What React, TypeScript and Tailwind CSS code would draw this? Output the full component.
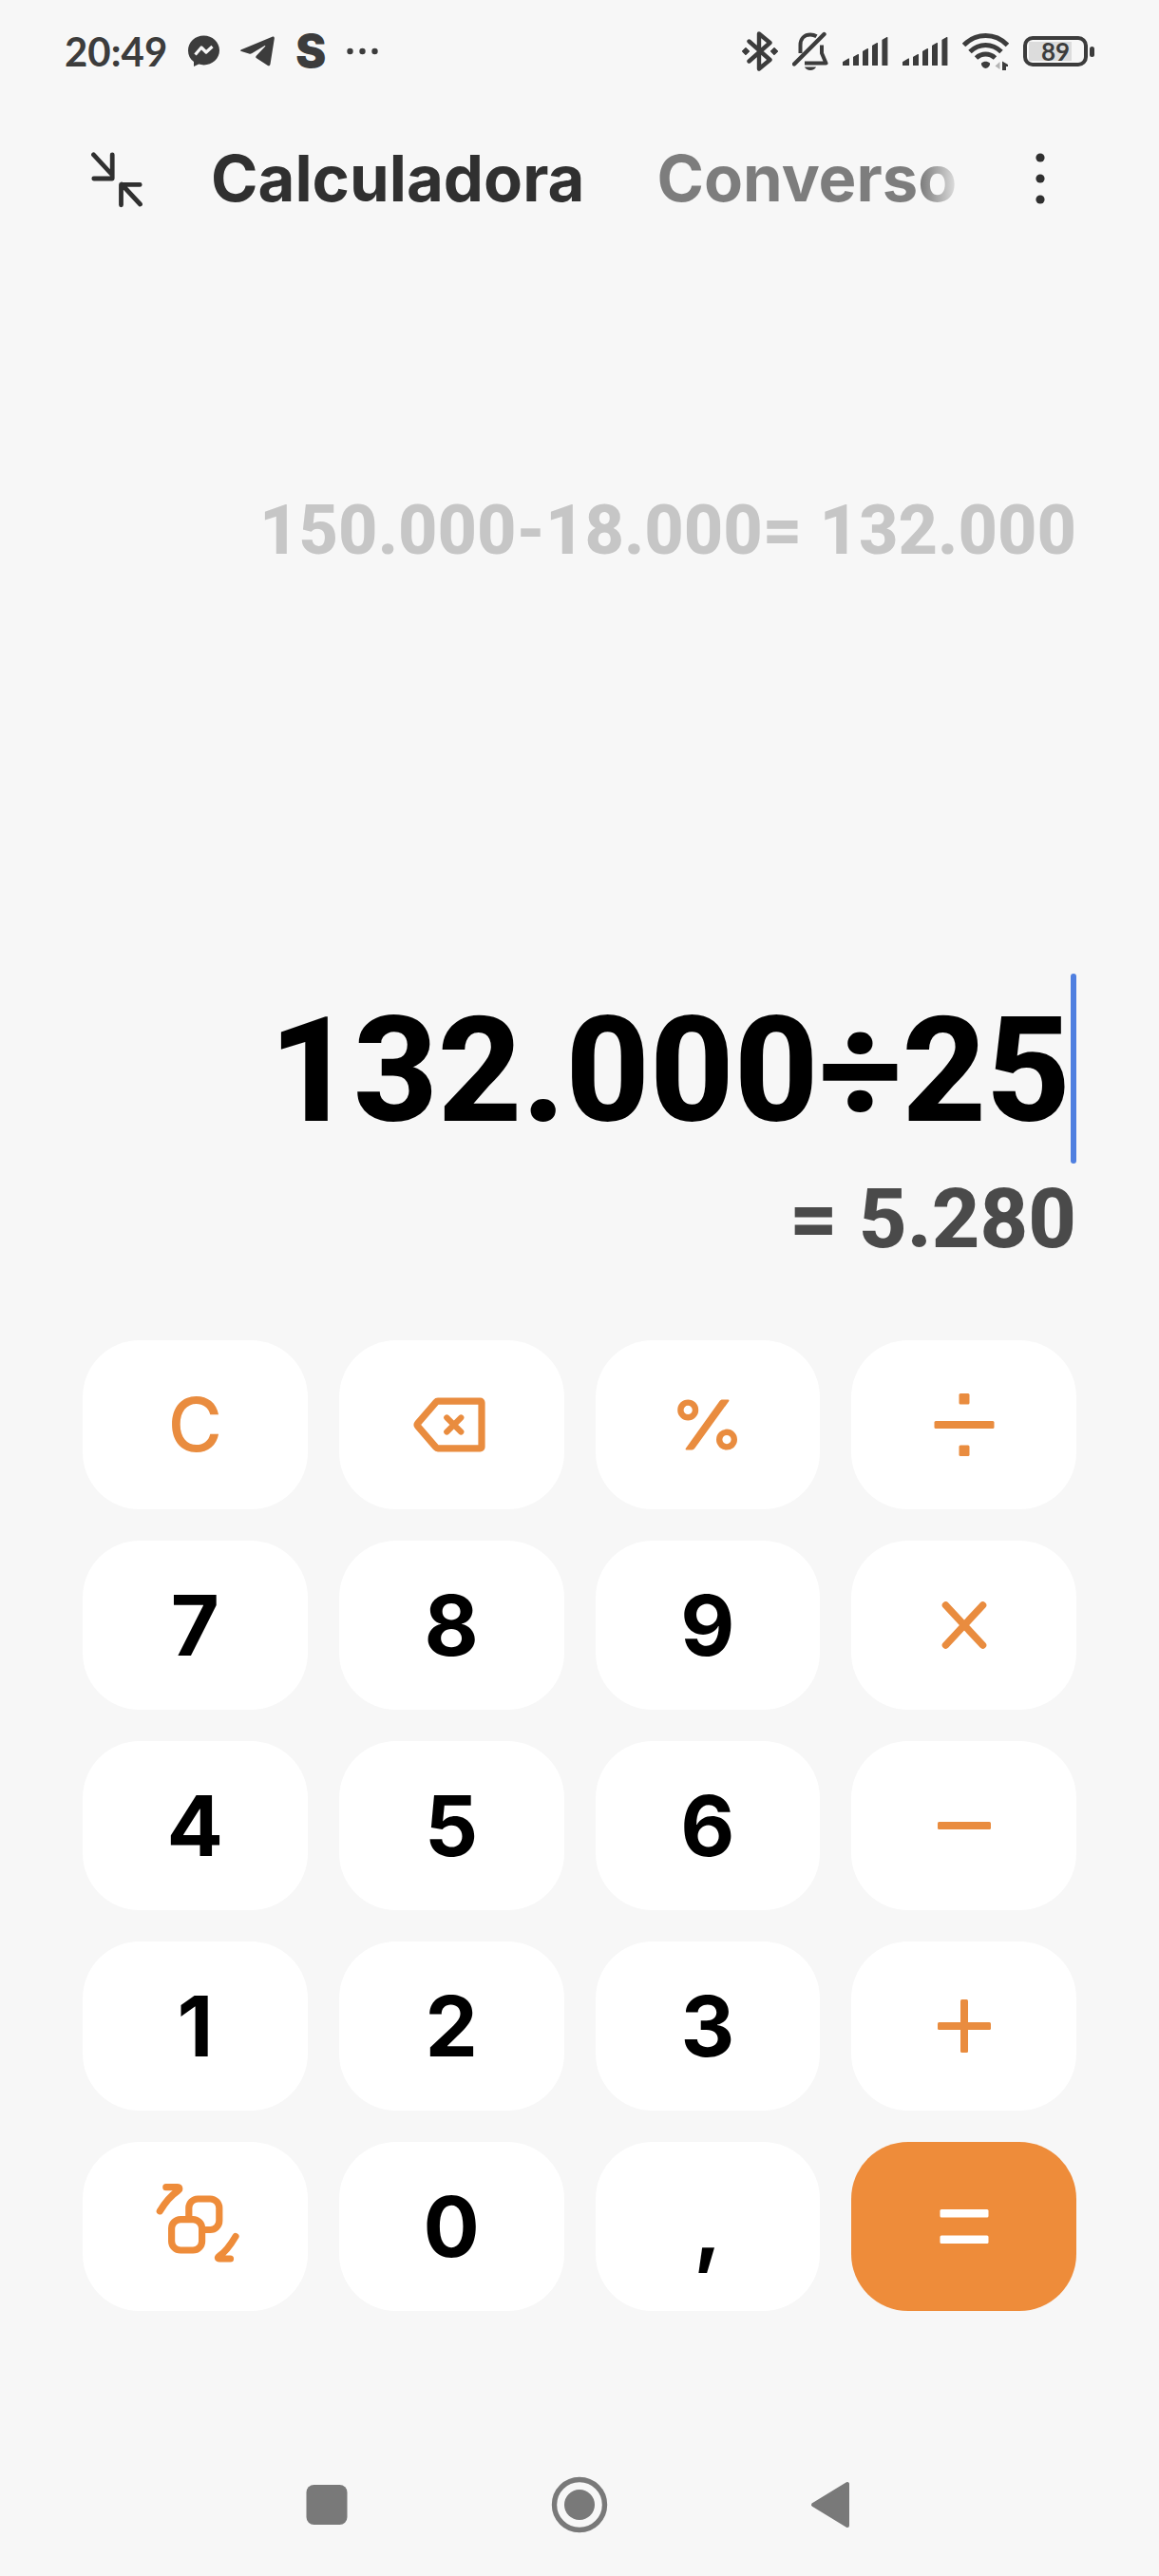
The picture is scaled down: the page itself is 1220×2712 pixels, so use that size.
import { useState } from 'react';
import type { ReactNode } from 'react';

// ============================================================
// Status bar icons
// ============================================================

function MessengerIcon() {
  return (
    <svg width="33" height="34" viewBox="0 0 33 34" fill="none" aria-hidden="true">
      <path d="M16.5 0.5C7.5 0.5 0 7.3 0 16.2c0 4.900 2.200 9 6 11.800V33l5.200-2.400c1.700.5 3.500.8 5.300.8 9 0 16.500-6.700 16.500-15.400S25.500.5 16.500.5Z" fill="#3c3c3c" />
      <path d="m7.500 20.500 6.500-7.500 5 5 6.500-6" stroke="#f7f7f7" strokeWidth="3.200" strokeLinejoin="round" />
    </svg>
  );
}

function TelegramIcon() {
  return (
    <svg width="36" height="32" viewBox="0 0 36 32" aria-hidden="true">
      <path d="M1 14.200 33.500.7c1.500-.6 2.600.2 2.300 2l-4.300 26.800c-.3 1.800-1.500 2.300-3 1.300L17 23.200c-1-.7-1-1.600-.2-2.500L26 11c.7-.9.200-1.300-.7-.7L12 18.300c-1 .5-1.800.6-2.900.2L1 16c-1.200-.4-1.200-1.300 0-1.800Z" fill="#3c3c3c" />
    </svg>
  );
}

function MoreDots() {
  return (
    <svg width="33" height="8" viewBox="0 0 33 8" fill="#3c3c3c" aria-hidden="true">
      <circle cx="3.500" cy="4" r="3.200" />
      <circle cx="16.500" cy="4" r="3.200" />
      <circle cx="29.500" cy="4" r="3.200" />
    </svg>
  );
}

function BluetoothIcon() {
  return (
    <svg width="38" height="42" viewBox="0 0 38 42" fill="none" aria-hidden="true">
      <path d="M7.500 10.500 29.500 30 18 39.500v-37L29.500 12 7.500 31.500" stroke="#3c3c3c" strokeWidth="4.400" strokeLinecap="round" strokeLinejoin="round" />
      <path d="m4 17.200 3.800 3.800L4 24.800 0.200 21ZM34 17.200l3.800 3.800-3.800 3.800-3.800-3.800Z" fill="#3c3c3c" stroke="#3c3c3c" strokeWidth="1" strokeLinejoin="round" />
    </svg>
  );
}

function BellOffIcon() {
  return (
    <svg width="38" height="42" viewBox="0 0 38 42" fill="none" stroke="#3c3c3c" aria-hidden="true">
      <path d="M2 34.500 33.500 3" strokeWidth="4.400" strokeLinecap="round" />
      <path d="M8.500 23V14.500C8.500 7.500 13 3.500 19 3.500c2.500 0 4.700.7 6.500 1.800" strokeWidth="4" />
      <path d="M31 14.500v8.500l4.500 10.500H13" strokeWidth="4" strokeLinejoin="round" />
      <path d="M13 37.500c1 2.200 3.200 3.500 6 3.500s5-1.300 6-3.500Z" fill="#3c3c3c" stroke="none" />
    </svg>
  );
}

function SignalIcon() {
  return (
    <svg width="48" height="32" viewBox="0 0 48 32" fill="#3c3c3c" stroke="#3c3c3c" strokeWidth="1.200" strokeLinejoin="round" aria-hidden="true">
      <path d="M.6 27.500 6.400 24v6.400H.6ZM11.600 22.200l4.800-2.600v10.800h-4.800ZM21.600 16.200l4.800-2.600v16.800h-4.800ZM31.600 10.200l4.800-2.600v22.800h-4.800ZM42 4.200l4.800-2.600v28.800H42Z" />
    </svg>
  );
}

function WifiIcon() {
  return (
    <svg width="49" height="40" viewBox="0 0 49 40" fill="none" aria-hidden="true">
      <g stroke="#3c3c3c" strokeWidth="5">
        <path d="M1.500 13.500C8 6.800 15.800 3.500 24.500 3.500S41 6.800 47.500 13.500" />
        <path d="M8 20.500c4.800-4.600 10.300-7 16.500-7s11.700 2.400 16.500 7" />
        <path d="M14.500 27c2.900-2.600 6.200-4 10-4s7.100 1.400 10 4" />
      </g>
      <path d="M20 32.500c2.600-2.300 6.400-2.300 9 0 .5 2.700-2.500 5.500-4.500 5.500s-5-2.800-4.500-5.500Z" fill="#3c3c3c" />
      <path d="M39.500 31v8L34.500 35.500Z" fill="#b4b4b4" />
      <path d="M42 30.500 48 34v2h-2v4h-4Z" fill="#3c3c3c" />
    </svg>
  );
}

function Battery({ level }: { level: number }) {
  return (
    <div className="flex items-center gap-0.5" role="img" aria-label={`${level}%`}>
      <div className="flex h-8 w-[68px] rounded-[10px] border-4 border-[#3c3c3c] p-0.5">
        <div className="flex flex-1 items-center justify-center bg-linear-to-r from-[#dcdcdc] from-80% to-transparent to-80% font-[Lato,sans-serif] text-[26px] leading-5 font-bold">
          {level}
        </div>
      </div>
      <div className="h-[11px] w-[5px] rounded-sm bg-[#3c3c3c]" />
    </div>
  );
}

// ============================================================
// Header and navigation icons
// ============================================================

function CollapseIcon() {
  return (
    <svg width="54" height="64" viewBox="0 0 54 64" fill="none" stroke="#303030" strokeWidth="4.800" strokeLinecap="round" strokeLinejoin="round" aria-hidden="true">
      <path d="M2.500 6.800 22 28M22.200 6.800v25.200H2.800M51.500 59 32 38M51.200 38.400H31.500v21.400" />
    </svg>
  );
}

function MenuIcon() {
  return (
    <svg width="10" height="54" viewBox="0 0 10 54" fill="#303030" aria-hidden="true">
      <circle cx="5" cy="5" r="4.600" />
      <circle cx="5" cy="27" r="4.600" />
      <circle cx="5" cy="49" r="4.600" />
    </svg>
  );
}

function RecentsIcon() {
  return (
    <svg width="60" height="60" viewBox="0 0 60 60" fill="#797979" aria-hidden="true">
      <rect x="8.500" y="9" width="43" height="42" rx="8" />
    </svg>
  );
}

function HomeIcon() {
  return (
    <svg width="60" height="60" viewBox="0 0 60 60" fill="#797979" aria-hidden="true">
      <circle cx="30" cy="30" r="26.500" fill="none" stroke="#797979" strokeWidth="5.400" />
      <circle cx="30" cy="30" r="16" />
    </svg>
  );
}

function BackIcon() {
  return (
    <svg width="60" height="60" viewBox="0 0 60 60" fill="#797979" stroke="#797979" strokeWidth="4" strokeLinejoin="round" aria-hidden="true">
      <path d="M10 30 46 8v44Z" />
    </svg>
  );
}

// ============================================================
// Keypad icons
// ============================================================

function BackspaceIcon() {
  return (
    <svg width="80" height="58" viewBox="0 0 80 58" fill="none" stroke="#e98c3f" strokeWidth="7.200" strokeLinecap="round" strokeLinejoin="round" aria-hidden="true">
      <path d="M26 4.200h44.500a1.500 1.500 0 0 1 1.500 1.500v46.600a1.500 1.500 0 0 1-1.500 1.500H26c-1 0-1.600-.4-2.200-1.100L4.600 30.300c-.7-.9-.7-1.700 0-2.600L23.800 5.300c.6-.7 1.200-1.100 2.200-1.100Z" />
      <path d="m35.300 21.500 15 15M50.300 21.500l-15 15" strokeWidth="6.200" />
    </svg>
  );
}

function PercentIcon() {
  return (
    <svg width="64" height="54" viewBox="0 0 64 54" fill="none" aria-hidden="true">
      <g stroke="#e98c3f" strokeWidth="6.400">
        <circle cx="11.200" cy="11.400" r="7.800" />
        <circle cx="52" cy="42.600" r="7.800" />
      </g>
      <path d="M47.500.5h6c1 0 1.200.9.700 1.700L18.500 51.500c-.9 1.300-1.900 2-3.200 2H9.600c-1 0-1.300-.8-.7-1.700L44.300 2.300C45.200 1 46.200.5 47.500.5Z" fill="#e98c3f" />
    </svg>
  );
}

function DivideIcon() {
  return (
    <svg width="64" height="66" viewBox="0 0 64 66" fill="#e98c3f" aria-hidden="true">
      <rect x="26.500" y="0" width="11" height="11.500" rx="1.500" />
      <rect x="0.500" y="29" width="63" height="8" rx="1.500" />
      <rect x="26.500" y="54.500" width="11" height="11.500" rx="1.500" />
    </svg>
  );
}

function MultiplyIcon() {
  return (
    <svg width="48" height="52" viewBox="0 0 48 52" fill="none" stroke="#e98c3f" strokeWidth="7.600" strokeLinecap="round" aria-hidden="true">
      <path d="m4.500 5 39 42M43.500 5l-39 42" />
    </svg>
  );
}

function MinusIcon() {
  return (
    <svg width="56" height="8" viewBox="0 0 56 8" fill="#e98c3f" aria-hidden="true">
      <rect width="56" height="8" rx="1.500" />
    </svg>
  );
}

function PlusIcon() {
  return (
    <svg width="56" height="56" viewBox="0 0 56 56" fill="#e98c3f" aria-hidden="true">
      <rect y="24" width="56" height="8" rx="1.500" />
      <rect x="24" width="8" height="56" rx="1.500" />
    </svg>
  );
}

function EqualsIcon() {
  return (
    <svg width="52" height="36" viewBox="0 0 52 36" fill="#ffffff" aria-hidden="true">
      <rect x="0.500" width="51" height="8.400" rx="1.500" />
      <rect x="0.500" y="27.600" width="51" height="8.400" rx="1.500" />
    </svg>
  );
}

function SwitchLayoutIcon() {
  return (
    <svg width="96" height="92" viewBox="0 0 96 92" fill="none" stroke="#ee8c3a" strokeWidth="7.200" strokeLinecap="round" strokeLinejoin="round" aria-hidden="true">
      <rect x="23.600" y="38.600" width="32" height="32.400" rx="9.500" />
      <path d="M41.800 38.500V26.500a9.500 9.500 0 0 1 9.500-9.500h13a9.500 9.500 0 0 1 9.500 9.500v13.500a9.500 9.500 0 0 1-9.500 9.500h-7.500" />
      <path d="M17.800 4.700h11.500c3 0 3.200 2.300 1 3.700C22 14 16.500 21 11.300 29.800" />
      <path d="M91 56.500c-5 8.500-9.500 15.500-17.300 20.800-2 1.500-1.500 2.700.5 2.700h11.300" />
    </svg>
  );
}

// ============================================================
// Keys
// ============================================================

type Key = { label: string; kind: 'digit' | 'action' | 'equals'; face: ReactNode };

const KEYS: Key[] = [
  { label: 'Borrar todo', kind: 'action', face: 'C' },
  { label: 'Retroceso', kind: 'action', face: <BackspaceIcon /> },
  { label: 'Porcentaje', kind: 'action', face: <PercentIcon /> },
  { label: 'Dividir', kind: 'action', face: <DivideIcon /> },
  { label: '7', kind: 'digit', face: '7' },
  { label: '8', kind: 'digit', face: '8' },
  { label: '9', kind: 'digit', face: '9' },
  { label: 'Multiplicar', kind: 'action', face: <MultiplyIcon /> },
  { label: '4', kind: 'digit', face: '4' },
  { label: '5', kind: 'digit', face: '5' },
  { label: '6', kind: 'digit', face: '6' },
  { label: 'Restar', kind: 'action', face: <MinusIcon /> },
  { label: '1', kind: 'digit', face: '1' },
  { label: '2', kind: 'digit', face: '2' },
  { label: '3', kind: 'digit', face: '3' },
  { label: 'Sumar', kind: 'action', face: <PlusIcon /> },
  { label: 'Cambiar teclado', kind: 'action', face: <SwitchLayoutIcon /> },
  { label: '0', kind: 'digit', face: '0' },
  { label: ',', kind: 'digit', face: ',' },
  { label: 'Igual', kind: 'equals', face: <EqualsIcon /> },
];

const KEY_STYLES = {
  digit: 'bg-white text-[88px] font-bold text-black',
  action: 'bg-white text-[78px] font-medium text-[#e98c3f]',
  equals: 'bg-[#ee8c3a]',
};

export default function App() {
  const [expression, setExpression] = useState('132.000÷25');

  return (
    <div className="flex min-h-screen flex-col bg-[#f7f7f7] font-[Inter,sans-serif]">
      {/* Status bar */}
      <div className="flex h-[108px] items-center justify-between px-[68px] text-[#3c3c3c]">
        <div className="flex items-center gap-[22px]">
          <span className="font-[Lato,sans-serif] text-[42px] leading-none font-bold">20:49</span>
          <MessengerIcon />
          <TelegramIcon />
          <span className="text-[48px] leading-none font-black">S</span>
          <MoreDots />
        </div>
        <div className="flex items-center gap-[15px]">
          <BluetoothIcon />
          <BellOffIcon />
          <SignalIcon />
          <SignalIcon />
          <WifiIcon />
          <Battery level={89} />
        </div>
      </div>

      {/* Header */}
      <header className="flex h-40 items-center pr-[120px] pl-24">
        <button type="button" aria-label="Minimizar" className="mr-[72px]">
          <CollapseIcon />
        </button>
        <nav className="flex min-w-0 flex-1 gap-[76px] text-[67px] leading-[72px] font-bold">
          <a href="#calculadora" className="text-[#303030]">Calculadora</a>
          <a href="#conversor" className="bg-linear-to-r from-[#7d7d7d] from-88% to-[#e0e0e0] bg-clip-text text-transparent">
            Converso
          </a>
        </nav>
        <button type="button" aria-label="Más opciones">
          <MenuIcon />
        </button>
      </header>

      <main className="flex flex-1 flex-col px-[87px]">
        {/* Display */}
        <section className="flex flex-1 flex-col justify-end pb-20 text-right font-[Roboto,sans-serif] font-extrabold">
          <p className="mb-[426px] text-[72px] leading-[80px] text-[#c6c6c6]">150.000-18.000= 132.000</p>
          <div className="flex items-center">
            <input
              type="text"
              aria-label="Operación"
              value={expression}
              onChange={(e) => setExpression(e.target.value)}
              className="h-[200px] min-w-0 flex-1 pt-1 text-right text-[154px] font-extrabold text-black caret-transparent outline-none"
            />
            <span className="h-[200px] w-1.5 rounded-sm bg-[#4f7fe0]" />
          </div>
          <output className="mt-2.5 text-[88px] leading-[96px] text-[#4a4a4a]">= 5.280</output>
        </section>

        {/* Keypad */}
        <section className="grid grid-cols-4 gap-[33px]">
          {KEYS.map((key) => (
            <button
              key={key.label}
              type="button"
              aria-label={key.label}
              className={`flex h-[178px] items-center justify-center rounded-[60px] leading-none ${KEY_STYLES[key.kind]}`}
            >
              {key.face}
            </button>
          ))}
        </section>
      </main>

      {/* System navigation */}
      <footer className="mt-[129px] flex h-[150px] items-center justify-center gap-[206px]">
        <button type="button" aria-label="Recientes">
          <RecentsIcon />
        </button>
        <button type="button" aria-label="Inicio">
          <HomeIcon />
        </button>
        <button type="button" aria-label="Atrás">
          <BackIcon />
        </button>
      </footer>
    </div>
  );
}
